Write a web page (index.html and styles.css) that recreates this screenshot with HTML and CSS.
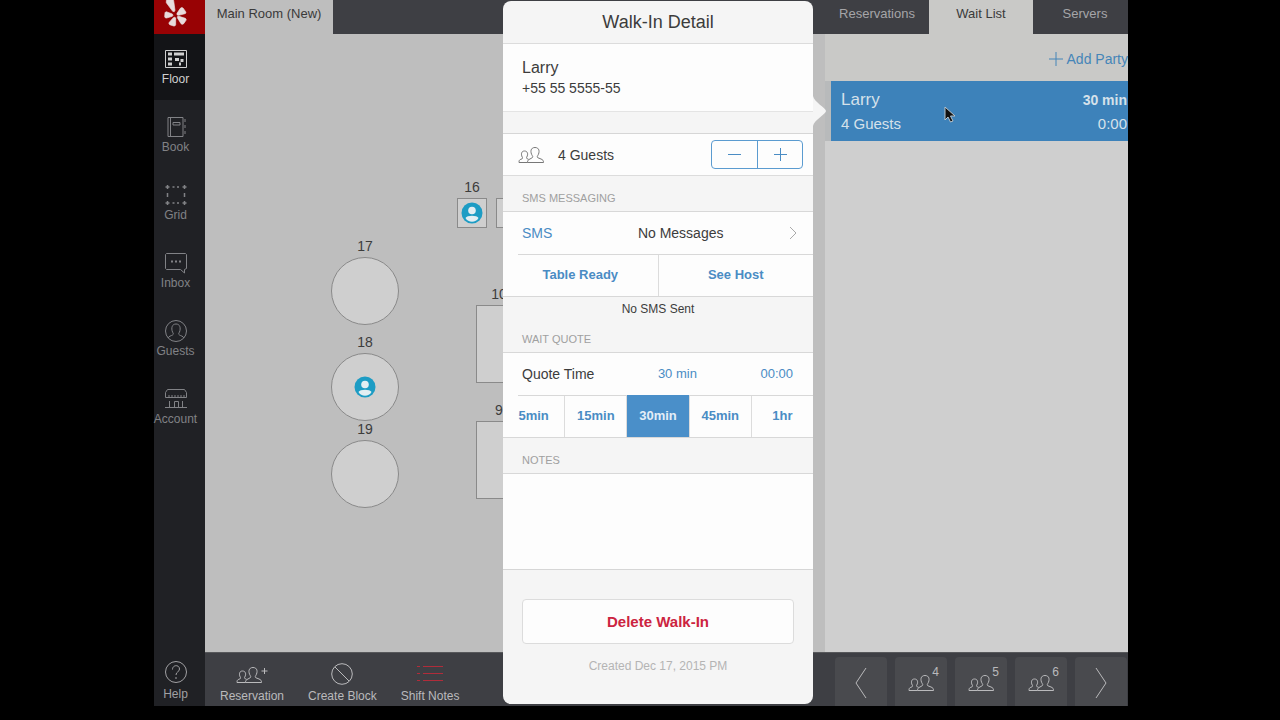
FILE: index.html
```
<!DOCTYPE html>
<html lang="en">

<head>
    <meta charset="UTF-8">
    <meta name="viewport" content="width=device-width, initial-scale=1">
    <title>Wait List - Main Room</title>
    <link rel="stylesheet" href="styles.css">
</head>

<body>
    <svg class="sprite" aria-hidden="true">
        <symbol id="people" viewBox="0 0 26 18">
            <path d="M9.5 16.500h16c0-2-.7-2.800-2.500-3.500l-3-1.200c-1-.4-.9-1.300-.3-2.100C22 6 21.500 1.500 17 1.500S12 6 14.300 9.700c.6.800.7 1.700-.3 2.100L12 13c-1.800.7-2.500 1.500-2.500 3.500z" />
            <path d="M9.500 16.500H1c0-2 .4-2.700 1.800-3.200l1.200-.5c.8-.4.7-1 .2-1.800C2.700 8 3.500 5 6.500 5s4 3 2.300 6c-.4.8-.5 1.300.4 1.700l1.300.6" />
        </symbol>
        <symbol id="seated" viewBox="0 0 22 22">
            <circle cx="11" cy="11" r="10.500" fill="#1d9cc4" />
            <circle cx="11" cy="8.500" r="3.800" fill="#e3eef2" />
            <path d="M4.500 16c1.500-3 11.500-3 13 0-2.500 5-10.500 5-13 0z" fill="#e3eef2" />
        </symbol>
    </svg>

    <div class="app">
        <nav class="sidebar">
            <a href="#" class="logo" aria-label="Home">
                <svg width="25" height="27" viewBox="0 0 75 81">
                    <path d="M10 1Q18-3 27-3Q31-3 32 2L36 31Q35 38 29 34L10 8Z" />
                    <path d="M6 38Q8 34 12 36L28 42Q32 46 28 49L11 54Q6 55 5 50Z" />
                    <path d="M31 53Q37 49 38 55L38 74Q37 79 32 78L20 74Q16 71 19 67Z" />
                    <path d="M43 53Q42 47 48 49L67 55Q71 57 69 61L62 71Q58 75 54 71Z" />
                    <path d="M42 40L52 25Q56 21 60 24L68 35Q71 39 66 41L47 46Q40 46 42 40Z" />
                </svg>
            </a>
            <a href="#" class="nav-item active">
                <svg width="24" height="24" viewBox="0 0 24 24">
                    <path d="M1.500 3.500h21v17h-21z" />
                    <path d="M4 7h4M10 7h10M4 12h4M4 17h4M11 12.500h4M18 12v3M15 17h2" stroke-width="3" />
                </svg>
                Floor
            </a>
            <a href="#" class="nav-item">
                <svg width="24" height="24" viewBox="0 0 24 24">
                    <path d="M4 2.500h15v19H4zM6.500 2.500v19M9 7.500h7v2.500H9zM21 4v3M21 10v3M21 16v3" />
                </svg>
                Book
            </a>
            <a href="#" class="nav-item">
                <svg width="24" height="24" viewBox="0 0 24 24">
                    <path d="M1.500 4h4M3.500 2v4M18.500 4h4M20.500 2v4M1.500 20h4M3.500 18v4M18.500 20h4M20.500 18v4M8.500 4h2M13 4h2M8.500 20h2M13 20h2M3.500 10v4M20.500 10v4" stroke-width="1.500" />
                </svg>
                Grid
            </a>
            <a href="#" class="nav-item">
                <svg width="24" height="24" viewBox="0 0 24 24">
                    <path d="M2.500 2.500h19l1 1v14l-2 1v3.500l-4-3.500h-14l-1-1v-14z" />
                    <path d="M7 10.500h2M11 10.500h2M15 10.500h2" stroke-width="2" />
                </svg>
                Inbox
            </a>
            <a href="#" class="nav-item">
                <svg width="24" height="24" viewBox="0 0 24 24">
                    <circle cx="12" cy="12" r="10.500" />
                    <path d="M4 19c1-2 3-2 4.500-3 1.500-.8.5-2 0-3C7 9 8 5 12 5s5 4 3.500 8c-.5 1-1.500 2.200 0 3 1.500 1 3.500 1 4.500 3" />
                </svg>
                Guests
            </a>
            <a href="#" class="nav-item">
                <svg width="24" height="24" viewBox="0 0 24 24">
                    <path d="M3.500 2.500h17l2 3v5h-21v-5zM5 8v2M8 8v2M11 8v2M14 8v2M17 8v2M20 8v2M1 20.500h22M5.500 14v6M10.500 20.500v-6h4v6M18.500 14v6" />
                </svg>
                Account
            </a>
            <a href="#" class="nav-item help">
                <svg width="24" height="24" viewBox="0 0 24 24">
                    <circle cx="12" cy="12" r="10.500" />
                    <path d="M8.500 9.500c0-5 7-5 7-.5 0 3-3.500 2.500-3.500 6M12 17v2" />
                </svg>
                Help
            </a>
        </nav>

        <div class="workspace">
            <header class="tabs">
                <button class="tab room active">Main Room (New)</button>
                <div class="list-tabs">
                    <button class="tab">Reservations</button>
                    <button class="tab active">Wait List</button>
                    <button class="tab">Servers</button>
                </div>
            </header>

            <main class="content">
                <section class="floor">
                    <div class="table t17 round"><span>17</span>
                        <div class="top"></div>
                    </div>
                    <div class="table t18 round"><span>18</span>
                        <div class="top"><svg width="22" height="22"><use href="#seated" /></svg></div>
                    </div>
                    <div class="table t19 round"><span>19</span>
                        <div class="top"></div>
                    </div>
                    <div class="table t16 small"><span>16</span>
                        <div class="top"><svg width="22" height="22"><use href="#seated" /></svg></div>
                    </div>
                    <div class="table t15 small"><span></span>
                        <div class="top"></div>
                    </div>
                    <div class="table t10 tall"><span>10</span>
                        <div class="top"></div>
                    </div>
                    <div class="table t9 tall"><span>9</span>
                        <div class="top"></div>
                    </div>
                </section>

                <aside class="wait-list">
                    <div class="add-row">
                        <button class="add-party">
                            <svg width="14" height="14" viewBox="0 0 14 14"><path d="M7 0v14M0 7h14" /></svg>
                            Add Party
                        </button>
                    </div>
                    <div class="party">
                        <div>
                            <div class="party-name">Larry</div>
                            <div class="party-size">4 Guests</div>
                        </div>
                        <div class="party-time">
                            <div class="party-quote">30 min</div>
                            <div class="party-size">0:00</div>
                        </div>
                    </div>
                </aside>
            </main>

            <footer class="toolbar">
                <div class="actions">
                    <button class="action">
                        <svg width="32" height="22" viewBox="0 0 32 22">
                            <use href="#people" x="0" y="3" width="26" height="18" />
                            <path d="M28.500 5v6M25.500 8h6" />
                        </svg>
                        Reservation
                    </button>
                    <button class="action">
                        <svg width="22" height="22" viewBox="0 0 22 22">
                            <circle cx="11" cy="11" r="10.300" />
                            <path d="M4 4l14 14" />
                        </svg>
                        Create Block
                    </button>
                    <button class="action">
                        <svg class="red" width="28" height="22" viewBox="0 0 28 22">
                            <path d="M7 3.500h20M7 10.500h20M7 17.500h20M1 3.500h3M1 10.500h3M1 17.500h3" />
                        </svg>
                        Shift Notes
                    </button>
                </div>
                <div class="sizes">
                    <button class="size" aria-label="Previous">
                        <svg width="12" height="32" viewBox="0 0 12 32"><path d="M11 1L1 16l10 15" /></svg>
                    </button>
                    <button class="size"><svg width="26" height="18"><use href="#people" /></svg><sup>4</sup></button>
                    <button class="size"><svg width="26" height="18"><use href="#people" /></svg><sup>5</sup></button>
                    <button class="size"><svg width="26" height="18"><use href="#people" /></svg><sup>6</sup></button>
                    <button class="size" aria-label="Next">
                        <svg width="12" height="32" viewBox="0 0 12 32"><path d="M1 1l10 15L1 31" /></svg>
                    </button>
                </div>
            </footer>
        </div>

        <div class="popover" role="dialog" aria-labelledby="popover-title">
            <svg class="arrow" width="13" height="30" viewBox="0 0 13 30"><path d="M0 0C1 6 13 12 13 15S1 24 0 30z" /></svg>
            <h2 id="popover-title">Walk-In Detail</h2>
            <div class="contact">
                <div class="contact-name">Larry</div>
                <div class="contact-phone">+55 55 5555-55</div>
            </div>
            <div class="row guests">
                <svg width="26" height="18"><use href="#people" /></svg>
                <span>4 Guests</span>
                <div class="stepper">
                    <button aria-label="Fewer guests"><svg width="13" height="13" viewBox="0 0 13 13"><path d="M0 6.500h13" /></svg></button>
                    <button aria-label="More guests"><svg width="13" height="13" viewBox="0 0 13 13"><path d="M0 6.500h13M6.500 0v13" /></svg></button>
                </div>
            </div>

            <h3>SMS MESSAGING</h3>
            <a href="#" class="row sms">
                <span class="blue">SMS</span>
                <span>No Messages</span>
                <svg width="8" height="14" viewBox="0 0 8 14"><path d="M1 1l6 6-6 6" /></svg>
            </a>
            <div class="split">
                <button>Table Ready</button>
                <button>See Host</button>
            </div>
            <p class="sms-status">No SMS Sent</p>

            <h3>WAIT QUOTE</h3>
            <div class="row quote">
                <span>Quote Time</span>
                <span class="blue">30 min</span>
                <span class="blue">00:00</span>
            </div>
            <div class="times">
                <button>5min</button>
                <button>15min</button>
                <button class="selected">30min</button>
                <button>45min</button>
                <button>1hr</button>
            </div>

            <h3><label for="notes">NOTES</label></h3>
            <textarea id="notes"></textarea>

            <div class="popover-footer">
                <button class="delete">Delete Walk-In</button>
                <p>Created Dec 17, 2015 PM</p>
            </div>
        </div>

        <svg class="cursor" width="12" height="18" viewBox="0 0 12 18">
            <path d="M1 1v13l3-3 2.500 5 2.500-1-2.500-5H11z" fill="#111" stroke="#b9c4cc" />
        </svg>
    </div>
</body>

</html>
```
FILE: styles.css
```
* {
    box-sizing: border-box;
}

body {
    margin: 0;
    background: #000;
    color: #3c3c3c;
    font-family: "Liberation Sans", Arial, sans-serif;
    font-size: 14px;
    line-height: 20px;
    padding: 0 152px 14px 154px;
}

button {
    font: inherit;
    color: inherit;
    background: none;
    border: 0;
    border-radius: 0;
    padding: 0;
    white-space: nowrap;
    cursor: pointer;
}

a {
    color: inherit;
    text-decoration: none;
}

svg {
    display: block;
    flex: none;
    fill: none;
    stroke: currentColor;
}

.sprite {
    position: absolute;
    width: 0;
    height: 0;
}

#seated {
    stroke: none;
}

.app {
    position: relative;
    display: flex;
    min-height: calc(100vh - 14px);
}

/* sidebar */
.sidebar {
    width: 51px;
    flex: none;
    display: flex;
    flex-direction: column;
    gap: 2px;
    background: #202125;
}

.logo {
    height: 34px;
    margin-bottom: -2px;
    padding-left: 9px;
    background: #980204;
}

.logo svg {
    stroke: #e8dcdc;
    stroke-width: 2;
    fill: #e8dcdc;
}

.nav-item {
    height: 66px;
    padding: 13px 8px 0 0;
    display: flex;
    flex-direction: column;
    align-items: center;
    font-size: 12px;
    line-height: 16px;
    color: #818286;
}

.nav-item.active {
    background: #131417;
    color: #d0d0d0;
}

.nav-item.help {
    height: 46px;
    margin-top: auto;
    padding-top: 0;
    gap: 2px;
    color: #a0a0a3;
}

/* top tabs */
.workspace {
    flex: 1;
    min-width: 0;
    display: flex;
    flex-direction: column;
}

.tabs {
    display: flex;
    justify-content: space-between;
    background: #3e3f44;
}

.tab {
    height: 34px;
    padding-bottom: 6px;
    font-size: 13px;
    color: #a5a5a8;
}

.tab.active {
    background: #c9c9c7;
    color: #3a3a3a;
}

.tab.room {
    width: 128px;
    background: #bebebe;
}

.list-tabs {
    width: 303px;
    display: flex;
    overflow: hidden;
}

.list-tabs .tab {
    width: 104px;
    flex: none;
}

/* floor plan */
.content {
    flex: 1;
    display: flex;
}

.floor {
    position: relative;
    flex: 1;
    overflow: hidden;
    background: #bebebe;
}

.table {
    position: absolute;
    display: flex;
    flex-direction: column;
    align-items: center;
    gap: 3px;
    font-size: 14px;
    line-height: 16px;
}

.table span {
    height: 16px;
}

.top {
    width: 46px;
    display: flex;
    align-items: center;
    justify-content: center;
    border: 1px solid #8a8a8a;
    background: #cfcfcf;
}

.round .top {
    width: 68px;
    height: 68px;
    border-radius: 50%;
}

.small .top {
    width: 30px;
    height: 30px;
}

.tall .top {
    height: 78px;
}

.t17 { left: 126px; top: 204px; }
.t18 { left: 126px; top: 300px; }
.t19 { left: 126px; top: 387px; }
.t16 { left: 252px; top: 145px; }
.t15 { left: 291px; top: 145px; }
.t10 { left: 271px; top: 252px; }
.t9 { left: 271px; top: 368px; }

/* wait list */
.wait-list {
    width: 303px;
    flex: none;
    background: #cfcfcf;
}

.add-row {
    height: 47px;
    padding-top: 2px;
    display: flex;
    justify-content: flex-end;
    align-items: center;
    background: #c9c9c7;
}

.add-party {
    display: flex;
    align-items: center;
    gap: 4px;
    color: #4585b8;
}

.party {
    height: 60px;
    padding: 7px 1px 0 10px;
    display: flex;
    justify-content: space-between;
    border-left: 6px solid #b8babb;
    background: #3d82ba;
    color: #d5e1ea;
    line-height: 24px;
}

.party-name {
    font-size: 17px;
}

.party-size {
    font-size: 15px;
}

.party-time {
    text-align: right;
}

.party-quote {
    font-weight: bold;
}

/* bottom toolbar */
.toolbar {
    height: 54px;
    display: flex;
    justify-content: space-between;
    border-top: 1px solid #57585b;
    background: #3e3f44;
    color: #bababc;
}

.actions {
    display: flex;
    gap: 24px;
    padding-left: 15px;
}

.action {
    display: flex;
    flex-direction: column;
    align-items: center;
    gap: 3px;
    padding-top: 10px;
    font-size: 12px;
    line-height: 16px;
}

.red {
    color: #b02c3a;
}

.sizes {
    display: flex;
    gap: 8px;
    padding: 4px 1px 0 0;
}

.size {
    position: relative;
    width: 52px;
    display: flex;
    align-items: center;
    justify-content: center;
    padding-top: 3px;
    border-radius: 4px 4px 0 0;
    background: #494a4e;
}

.size sup {
    position: absolute;
    top: 8px;
    right: 8px;
    font-size: 12px;
    line-height: 14px;
}

/* walk-in popover */
.popover {
    position: absolute;
    top: 1px;
    right: 315px;
    width: 310px;
    border-radius: 8px;
    background: #f5f5f5;
}

.arrow {
    position: absolute;
    left: 100%;
    top: 95px;
    fill: #f5f5f5;
    stroke: none;
}

.popover h2 {
    margin: 0;
    font-size: 18px;
    font-weight: normal;
    line-height: 42px;
    text-align: center;
    border-bottom: 1px solid #dcdcdc;
}

.contact {
    height: 68px;
    padding: 14px 19px 0;
    margin-bottom: 21px;
    border-bottom: 1px solid #e4e4e4;
    background: #fdfdfd;
}

.contact-name {
    font-size: 16px;
}

.row {
    height: 42px;
    display: flex;
    align-items: center;
    background: #fdfdfd;
}

.guests {
    height: 43px;
    padding: 0 10px 0 15px;
    border-top: 1px solid #d6d6d6;
    border-bottom: 1px solid #dcdcdc;
}

.guests > svg {
    margin-right: 14px;
    color: #777;
}

.stepper {
    display: flex;
    margin-left: auto;
    border: 1px solid #5b9bd0;
    border-radius: 4px;
    color: #4a8cc4;
}

.stepper button {
    width: 45px;
    height: 27px;
    display: flex;
    align-items: center;
    justify-content: center;
}

.stepper button + button {
    border-left: 1px solid #5b9bd0;
}

.popover h3 {
    margin: 0;
    padding: 13px 19px 4px;
    font-size: 11px;
    font-weight: normal;
    line-height: 18px;
    color: #a0a0a0;
    border-bottom: 1px solid #d8d8d8;
}

.blue {
    color: #4a8cc4;
}

.sms {
    padding: 0 16px 0 19px;
    justify-content: space-between;
}

.sms span + span {
    padding-left: 20px;
}

.sms svg {
    color: #aaa;
}

.split,
.times {
    position: relative;
    height: 43px;
    display: flex;
    background: #fdfdfd;
    border-bottom: 1px solid #d8d8d8;
    color: #4a8cc4;
    font-size: 13px;
    font-weight: bold;
}

/* inset line above the button rows */
.split::before,
.times::before {
    content: "";
    position: absolute;
    left: 15px;
    right: 0;
    top: 0;
    border-top: 1px solid #d8d8d8;
}

.split button,
.times button {
    flex: 1;
}

.split button + button,
.times button + button {
    border-left: 1px solid #dcdcdc;
}

.sms-status {
    margin: 0;
    padding-top: 3px;
    font-size: 12px;
    line-height: 18px;
    text-align: center;
}

/* pulls the heading up close to the status line */
.sms-status + h3 {
    padding-top: 12px;
}

.quote {
    padding: 0 20px 0 19px;
    justify-content: space-between;
}

.quote .blue {
    font-size: 13px;
}

.times .selected {
    position: relative;
    background: #4a8fc9;
    color: #e4eef7;
}

textarea {
    display: block;
    width: 100%;
    height: 95px;
    padding: 8px 19px;
    border: 0;
    resize: none;
    background: #fdfdfd;
    font: inherit;
}

.popover-footer {
    padding: 29px 19px 28px;
    border-top: 1px solid #d6d6d6;
    text-align: center;
}

.delete {
    width: 100%;
    height: 45px;
    border: 1px solid #dcdcdc;
    border-radius: 4px;
    background: #fdfdfd;
    color: #cc2440;
    font-size: 15px;
    font-weight: bold;
}

.popover-footer p {
    margin: 12px 0 0;
    font-size: 12px;
    color: #b4b4b4;
}

.cursor {
    position: absolute;
    right: 172px;
    top: 106px;
}
```
